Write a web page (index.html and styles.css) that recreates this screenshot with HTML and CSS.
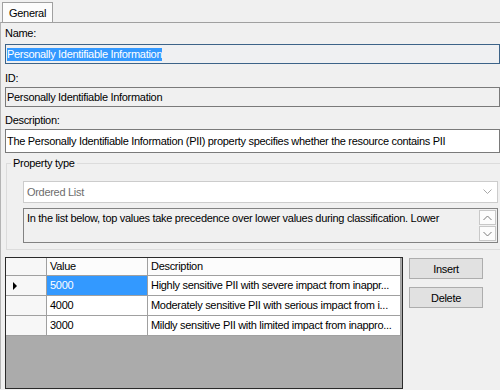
FILE: index.html
```html
<!DOCTYPE html>
<html>
<head>
<meta charset="utf-8">
<link rel="stylesheet" href="styles.css">
</head>
<body>
<div class="tabs">
  <div class="tab">General</div>
</div>
<div class="panel">
  <div class="lbl lbl-name">Name:</div>
  <div class="field field-focus"><span class="sel">Personally Identifiable Information</span></div>
  <div class="lbl lbl-id">ID:</div>
  <div class="field field-ro">Personally Identifiable Information</div>
  <div class="lbl lbl-desc">Description:</div>
  <div class="field field-desc">The Personally Identifiable Information (PII) property specifies whether the resource contains PII</div>

  <fieldset class="group">
    <legend class="group-title">Property type</legend>
    <div class="combo">
      <span class="combo-text">Ordered List</span>
      <svg class="combo-arrow" width="9" height="6" viewBox="0 0 9 6"><path d="M0.5 0.5 L4.5 4.5 L8.5 0.5" fill="none" stroke="#a8a8a8" stroke-width="1"/></svg>
    </div>
    <div class="info">
      <div class="info-text">In the list below, top values take precedence over lower values during classification. Lower</div>
      <div class="spin">
        <div class="spin-btn"><svg width="9" height="6" viewBox="0 0 9 6"><path d="M0.5 5 L4.5 1 L8.5 5" fill="none" stroke="#7a7a7a" stroke-width="1"/></svg></div>
        <div class="spin-btn"><svg width="9" height="6" viewBox="0 0 9 6"><path d="M0.5 1 L4.5 5 L8.5 1" fill="none" stroke="#7a7a7a" stroke-width="1"/></svg></div>
      </div>
    </div>
  </fieldset>

  <div class="bottom">
    <div class="grid">
      <div class="grid-row">
        <div class="cell rowhead"></div>
        <div class="cell colhead c-val">Value</div>
        <div class="cell colhead c-desc">Description</div>
      </div>
      <div class="grid-row">
        <div class="cell rowhead"><span class="pointer"></span></div>
        <div class="cell c-val selected">5000</div>
        <div class="cell c-desc">Highly sensitive PII with severe impact from inappr...</div>
      </div>
      <div class="grid-row">
        <div class="cell rowhead"></div>
        <div class="cell c-val">4000</div>
        <div class="cell c-desc">Moderately sensitive PII with serious impact from i...</div>
      </div>
      <div class="grid-row">
        <div class="cell rowhead"></div>
        <div class="cell c-val">3000</div>
        <div class="cell c-desc">Mildly sensitive PII with limited impact from inappro...</div>
      </div>
    </div>
    <div class="buttons">
      <button class="btn">Insert</button>
      <button class="btn">Delete</button>
    </div>
  </div>
</div>
</body>
</html>
```
FILE: styles.css
```css
html, body {
  margin: 0;
  padding: 0;
  background: #f0f0f0;
  overflow: hidden;
}
body {
  width: 500px;
  height: 390px;
  font-family: "Liberation Sans", Arial, sans-serif;
  font-size: 11px;
  line-height: 13px;
  letter-spacing: -0.3px;
  color: #000;
}
.tabs {
  height: 22px;
  display: flex;
  align-items: flex-end;
  padding-left: 2px;
}
.tab {
  box-sizing: border-box;
  width: 51px;
  height: 20px;
  border: 1px solid #a0a0a0;
  border-bottom: none;
  background: #fcfcfc;
  padding: 4px 0 0 6px;
  color: #000;
}
.panel {
  border-top: 1px solid #a0a0a0;
  border-left: 1px solid #b4b4b4;
  padding-left: 4px;
  height: 367px;
  box-sizing: border-box;
}
.lbl { line-height: 13px; }
.lbl-name { padding-top: 4px; margin-bottom: 4px; }
.lbl-id { padding-top: 8px; margin-bottom: 2px; }
.lbl-desc { padding-top: 7px; margin-bottom: 2px; }

.field {
  box-sizing: border-box;
  height: 20px;
  border: 1px solid #7a7a7a;
  padding: 3px 0 0 1px;
  white-space: nowrap;
  overflow: hidden;
}
.field-focus {
  border-color: #3c6388;
  background: #eff0f2;
}
.sel {
  background: #3399ff;
  color: #fff;
  display: inline-block;
  line-height: 13px;
}
.field-ro { background: #f0f0f0; }
.field-desc {
  height: 24px;
  background: #fff;
  padding-top: 5px;
}

.group {
  margin: 4px -10px 0 1px;
  padding: 11px 0 6px 16px;
  border: 1px solid #dcdcdc;
  min-width: 0;
}
.group-title {
  margin-left: -12px;
  padding: 0 2px;
  line-height: 13px;
}
.combo {
  box-sizing: border-box;
  width: 475px;
  height: 22px;
  background: #fff;
  border: 1px solid #cccccc;
  display: flex;
  align-items: center;
  justify-content: space-between;
  padding: 0 5px 0 3px;
}
.combo-text { color: #6d6d6d; }
.combo-arrow { display: block; }
.info {
  box-sizing: border-box;
  width: 475px;
  height: 35px;
  margin-top: 5px;
  border: 1px solid #828282;
  background: #f0f0f0;
  display: flex;
  justify-content: space-between;
}
.info-text {
  padding: 3px 0 0 3px;
  white-space: nowrap;
}
.spin {
  display: flex;
  flex-direction: column;
  gap: 1px;
  padding: 1px 1px 0 0;
}
.spin-btn {
  box-sizing: border-box;
  width: 17px;
  height: 15px;
  border: 1px solid #c8c8c8;
  background: #fcfcfc;
  display: flex;
  align-items: center;
  justify-content: center;
}
.spin-btn svg { display: block; }

.bottom {
  display: flex;
  align-items: flex-start;
  margin-top: 7px;
}
.grid {
  box-sizing: border-box;
  width: 398px;
  height: 132px;
  border: 1px solid #2a2a2a;
  background: #ababab;
}
.grid-row {
  display: flex;
  height: 20px;
}
.grid-row:first-child { height: 18px; }
.cell {
  box-sizing: border-box;
  border-right: 1px solid #a0a0a0;
  border-bottom: 1px solid #a0a0a0;
  background: #fff;
  padding: 3px 0 0 3px;
  white-space: nowrap;
  overflow: hidden;
}
.grid-row:first-child .cell { padding-top: 2px; }
.rowhead {
  width: 41px;
  background: #f7f7f7;
  padding: 0 0 0 7px;
  display: flex;
  align-items: center;
}
.c-val { width: 101px; }
.c-desc { width: 253px; }
.colhead { background: #fcfcfc; }
.selected {
  background: #3399ff;
  color: #fff;
}
.pointer {
  width: 0;
  height: 0;
  border-left: 4px solid #000;
  border-top: 4px solid transparent;
  border-bottom: 4px solid transparent;
}
.buttons {
  display: flex;
  flex-direction: column;
  gap: 8px;
  margin-left: 6px;
  padding-top: 1px;
}
.btn {
  box-sizing: border-box;
  width: 74px;
  height: 21px;
  background: #e1e1e1;
  border: 1px solid #adadad;
  font-family: "Liberation Sans", Arial, sans-serif;
  font-size: 11px;
  letter-spacing: -0.3px;
  color: #000;
  padding: 0;
  margin: 0;
}
```
